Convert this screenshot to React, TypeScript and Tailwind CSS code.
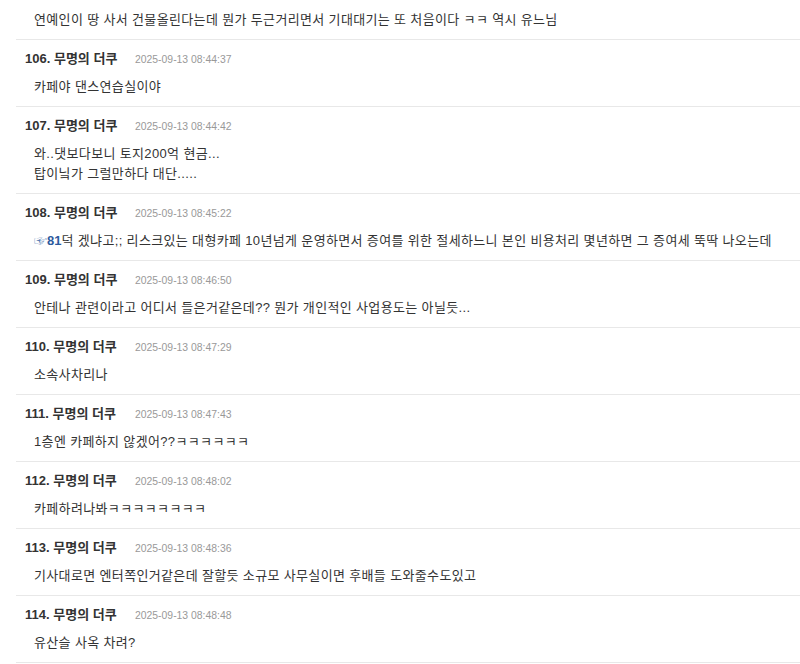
const comments: { no?: number; date?: string; lines: React.ReactNode[] }[] = [
  { lines: ["연예인이 땅 사서 건물올린다는데 뭔가 두근거리면서 기대대기는 또 처음이다 ㅋㅋ 역시 유느님"] },
  { no: 106, date: "2025-09-13 08:44:37", lines: ["카페야 댄스연습실이야"] },
  { no: 107, date: "2025-09-13 08:44:42", lines: ["와..댓보다보니 토지200억 현금...", "탑이닠가 그럴만하다 대단....."] },
  {
    no: 108,
    date: "2025-09-13 08:45:22",
    lines: [
      <>
        <a className="font-bold text-[#2c5a9e] tracking-normal">
          <span className="text-[#5a7fb5]">☞</span>81
        </a>
        덕 겠냐고;; 리스크있는 대형카페 10년넘게 운영하면서 증여를 위한 절세하느니 본인 비용처리 몇년하면 그 증여세 뚝딱 나오는데
      </>,
    ],
  },
  { no: 109, date: "2025-09-13 08:46:50", lines: ["안테나 관련이라고 어디서 들은거같은데?? 뭔가 개인적인 사업용도는 아닐듯..."] },
  { no: 110, date: "2025-09-13 08:47:29", lines: ["소속사차리나"] },
  { no: 111, date: "2025-09-13 08:47:43", lines: ["1층엔 카페하지 않겠어??ㅋㅋㅋㅋㅋㅋ"] },
  { no: 112, date: "2025-09-13 08:48:02", lines: ["카페하려나봐ㅋㅋㅋㅋㅋㅋㅋㅋ"] },
  { no: 113, date: "2025-09-13 08:48:36", lines: ["기사대로면 엔터쪽인거같은데 잘할듯 소규모 사무실이면 후배들 도와줄수도있고"] },
  { no: 114, date: "2025-09-13 08:48:48", lines: ["유산슬 사옥 차려?"] },
];

export default function App() {
  return (
    <div
      className="w-[800px] h-[664px] overflow-hidden bg-white text-[#333]"
      style={{ fontFamily: '"Liberation Sans", "Noto Sans CJK KR", sans-serif' }}
    >
      <div className="ml-4 -mt-[2px]">
        {comments.map((c, i) => (
          <div key={i} className="border-b border-[#e8e8e8] pt-[12px] pb-[9px]">
            {c.no !== undefined && (
              <div className="flex items-baseline h-[14px] leading-[14px] pl-[9px] mb-[11px]">
                <span className="font-bold text-[13px] text-[#333] w-[110px]">
                  {c.no}. 무명의 더쿠
                </span>
                <span className="text-[10.4px] text-[#999]">{c.date}</span>
              </div>
            )}
            <div className="pl-[18px] text-[13px] leading-[20px] tracking-[0.35px]">
              {c.lines.map((l, j) => (
                <div key={j}>{l}</div>
              ))}
            </div>
          </div>
        ))}
      </div>
    </div>
  );
}
